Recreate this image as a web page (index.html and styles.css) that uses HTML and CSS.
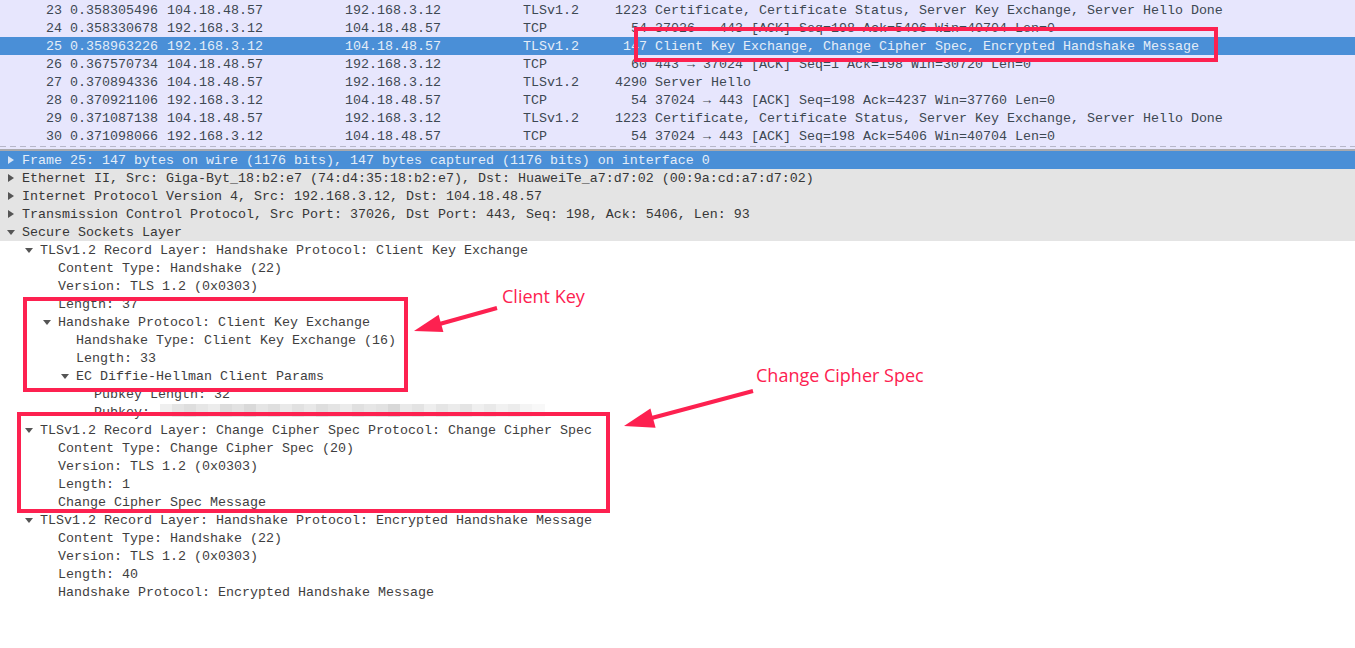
FILE: index.html
```html
<!DOCTYPE html>
<html>
<head>
<meta charset="utf-8">
<link rel="stylesheet" href="styles.css">
</head>
<body>
<div class="page">
  <div class="list">
    <div class="pkt"><span class="c-no">23</span><span>0.358305496</span><span>104.18.48.57</span><span>192.168.3.12</span><span>TLSv1.2</span><span class="c-len">1223</span><span>Certificate, Certificate Status, Server Key Exchange, Server Hello Done</span></div>
    <div class="pkt"><span class="c-no">24</span><span>0.358330678</span><span>192.168.3.12</span><span>104.18.48.57</span><span>TCP</span><span class="c-len">54</span><span>37026 → 443 [ACK] Seq=198 Ack=5406 Win=40704 Len=0</span></div>
    <div class="pkt sel"><span class="c-no">25</span><span>0.358963226</span><span>192.168.3.12</span><span>104.18.48.57</span><span>TLSv1.2</span><span class="c-len">147</span><span>Client Key Exchange, Change Cipher Spec, Encrypted Handshake Message</span></div>
    <div class="pkt"><span class="c-no">26</span><span>0.367570734</span><span>104.18.48.57</span><span>192.168.3.12</span><span>TCP</span><span class="c-len">60</span><span>443 → 37024 [ACK] Seq=1 Ack=198 Win=30720 Len=0</span></div>
    <div class="pkt"><span class="c-no">27</span><span>0.370894336</span><span>104.18.48.57</span><span>192.168.3.12</span><span>TLSv1.2</span><span class="c-len">4290</span><span>Server Hello</span></div>
    <div class="pkt"><span class="c-no">28</span><span>0.370921106</span><span>192.168.3.12</span><span>104.18.48.57</span><span>TCP</span><span class="c-len">54</span><span>37024 → 443 [ACK] Seq=198 Ack=4237 Win=37760 Len=0</span></div>
    <div class="pkt"><span class="c-no">29</span><span>0.371087138</span><span>104.18.48.57</span><span>192.168.3.12</span><span>TLSv1.2</span><span class="c-len">1223</span><span>Certificate, Certificate Status, Server Key Exchange, Server Hello Done</span></div>
    <div class="pkt"><span class="c-no">30</span><span>0.371098066</span><span>192.168.3.12</span><span>104.18.48.57</span><span>TCP</span><span class="c-len">54</span><span>37024 → 443 [ACK] Seq=198 Ack=5406 Win=40704 Len=0</span></div>
    <div class="list-end"><div class="dash"></div></div>
  </div>

  <div class="details">
    <div class="node l0 top hl"><span class="tg closed"></span><span>Frame 25: 147 bytes on wire (1176 bits), 147 bytes captured (1176 bits) on interface 0</span></div>
    <div class="node l0 top"><span class="tg closed"></span><span>Ethernet II, Src: Giga-Byt_18:b2:e7 (74:d4:35:18:b2:e7), Dst: HuaweiTe_a7:d7:02 (00:9a:cd:a7:d7:02)</span></div>
    <div class="node l0 top"><span class="tg closed"></span><span>Internet Protocol Version 4, Src: 192.168.3.12, Dst: 104.18.48.57</span></div>
    <div class="node l0 top"><span class="tg closed"></span><span>Transmission Control Protocol, Src Port: 37026, Dst Port: 443, Seq: 198, Ack: 5406, Len: 93</span></div>
    <div class="node l0 top"><span class="tg open"></span><span>Secure Sockets Layer</span></div>
    <div class="node l1"><span class="tg open"></span><span>TLSv1.2 Record Layer: Handshake Protocol: Client Key Exchange</span></div>
    <div class="node l2"><span class="tg"></span><span>Content Type: Handshake (22)</span></div>
    <div class="node l2"><span class="tg"></span><span>Version: TLS 1.2 (0x0303)</span></div>
    <div class="node l2"><span class="tg"></span><span>Length: 37</span></div>
    <div class="node l2"><span class="tg open"></span><span>Handshake Protocol: Client Key Exchange</span></div>
    <div class="node l3"><span class="tg"></span><span>Handshake Type: Client Key Exchange (16)</span></div>
    <div class="node l3"><span class="tg"></span><span>Length: 33</span></div>
    <div class="node l3"><span class="tg open"></span><span>EC Diffie-Hellman Client Params</span></div>
    <div class="node l4"><span class="tg"></span><span>Pubkey Length: 32</span></div>
    <div class="node l4"><span class="tg"></span><span>Pubkey:</span><span class="blur"></span></div>
    <div class="node l1"><span class="tg open"></span><span>TLSv1.2 Record Layer: Change Cipher Spec Protocol: Change Cipher Spec</span></div>
    <div class="node l2"><span class="tg"></span><span>Content Type: Change Cipher Spec (20)</span></div>
    <div class="node l2"><span class="tg"></span><span>Version: TLS 1.2 (0x0303)</span></div>
    <div class="node l2"><span class="tg"></span><span>Length: 1</span></div>
    <div class="node l2"><span class="tg"></span><span>Change Cipher Spec Message</span></div>
    <div class="node l1"><span class="tg open"></span><span>TLSv1.2 Record Layer: Handshake Protocol: Encrypted Handshake Message</span></div>
    <div class="node l2"><span class="tg"></span><span>Content Type: Handshake (22)</span></div>
    <div class="node l2"><span class="tg"></span><span>Version: TLS 1.2 (0x0303)</span></div>
    <div class="node l2"><span class="tg"></span><span>Length: 40</span></div>
    <div class="node l2"><span class="tg"></span><span>Handshake Protocol: Encrypted Handshake Message</span></div>
  </div>

  <svg class="marks" width="1355" height="648" viewBox="0 0 1355 648">
    <g fill="none" stroke="#fd2150" stroke-width="4">
      <rect x="636" y="29" width="580" height="31"/>
      <rect x="25" y="299" width="381" height="91"/>
      <rect x="19" y="414" width="589" height="97"/>
      <line x1="497" y1="308" x2="436" y2="325"/>
      <line x1="753" y1="391" x2="648" y2="419"/>
    </g>
    <g fill="#fd2150">
      <polygon points="414,331 438.6,314.7 443.4,332.1"/>
      <polygon points="624,426 650.4,408.4 655.6,427.7"/>
    </g>
  </svg>
  <div class="label label-key">Client Key</div>
  <div class="label label-ccs">Change Cipher Spec</div>
</div>
</body>
</html>
```

FILE: styles.css
```css
html, body {
  margin: 0;
  padding: 0;
  background: #ffffff;
}

.page {
  position: relative;
  width: 1355px;
  height: 648px;
  overflow: hidden;
  font-family: "Liberation Mono", "DejaVu Sans Mono", monospace;
  font-size: 13.333px;
}

.list {
  background: #e7e6fd;
  padding-top: 1px;
}

.pkt {
  display: grid;
  grid-template-columns: 70px 97px 178px 178px 77px 55px 1fr;
  height: 17px;
  padding-top: 1px;
  line-height: 18px;
  white-space: nowrap;
  color: #3d4852;
}

.pkt .c-no,
.pkt .c-len {
  text-align: right;
  padding-right: 8px;
}

.pkt.sel {
  background: #4a8fd7;
  color: #e4edf8;
}

.list-end {
  padding-top: 1px;
  padding-bottom: 2px;
  border-bottom: 2px solid #a9a9ad;
}

.dash {
  height: 1px;
  background: repeating-linear-gradient(90deg, #b7b7c9 0 6px, transparent 6px 10px);
}

.details {
  background: #ffffff;
}

.node {
  display: flex;
  height: 17px;
  padding-top: 1px;
  line-height: 18px;
  white-space: nowrap;
  color: #3e3e3e;
}

.node.top {
  background: #e4e4e4;
  color: #363636;
}

.node.hl {
  background: #4a8fd7;
  color: #e4edf8;
}

.l0 { padding-left: 4px; }
.l1 { padding-left: 22px; }
.l2 { padding-left: 40px; }
.l3 { padding-left: 58px; }
.l4 { padding-left: 76px; }

.tg {
  flex: none;
  width: 18px;
  height: 17px;
  position: relative;
}

.tg.closed::before {
  content: "";
  position: absolute;
  left: 4px;
  top: 4px;
  border-left: 6px solid #555555;
  border-top: 4px solid transparent;
  border-bottom: 4px solid transparent;
}

.node.hl .tg.closed::before {
  border-left-color: #d6e4f6;
}

.tg.open::before {
  content: "";
  position: absolute;
  left: 3px;
  top: 6px;
  border-top: 5px solid #555555;
  border-left: 4px solid transparent;
  border-right: 4px solid transparent;
}

.blur {
  display: inline-block;
  width: 385px;
  height: 13px;
  margin-left: 10px;
  background: linear-gradient(90deg,
    #efefef 0 12px, #e4e4e4 12px 24px, #dedede 24px 36px, #e6e6e6 36px 48px,
    #ececec 48px 60px, #dcdcdc 60px 72px, #e2e2e2 72px 84px, #d9d9d9 84px 96px,
    #e5e5e5 96px 108px, #dfdfdf 108px 120px, #e9e9e9 120px 132px, #e1e1e1 132px 144px,
    #e8e8e8 144px 156px, #dedede 156px 168px, #e4e4e4 168px 180px, #ebebeb 180px 192px,
    #e0e0e0 192px 204px, #e6e6e6 204px 216px, #e2e2e2 216px 228px, #d8d8d8 228px 240px,
    #e9e9e9 240px 252px, #e3e3e3 252px 264px, #eeeeee 264px 276px, #e5e5e5 276px 288px,
    #ebebeb 288px 300px, #e4e4e4 300px 312px, #efefef 312px 324px, #e9e9e9 324px 336px,
    #f1f1f1 336px 348px, #ececec 348px 360px, #f4f4f4 360px 372px, #f8f8f8 372px 385px);
}

.marks {
  position: absolute;
  left: 0;
  top: 0;
  pointer-events: none;
}

.label {
  position: absolute;
  font-family: "Open Sans", "Noto Sans", sans-serif;
  font-size: 18px;
  line-height: 18px;
  color: #fd2150;
  white-space: nowrap;
}

.label-key {
  left: 502px;
  top: 287px;
}

.label-ccs {
  left: 756px;
  top: 366px;
}
```
